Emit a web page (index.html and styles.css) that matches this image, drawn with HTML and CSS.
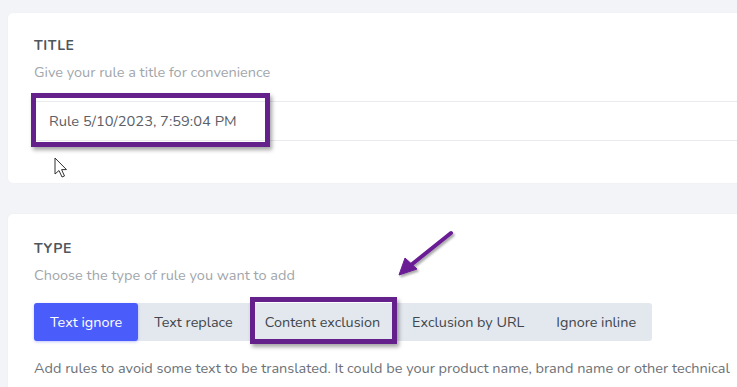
FILE: index.html
```html
<!DOCTYPE html>
<html>
<head>
<meta charset="utf-8">
<link rel="stylesheet" href="styles.css">
</head>
<body>
<div class="page">
  <section class="card card-title">
    <h3 class="label">TITLE</h3>
    <p class="hint">Give your rule a title for convenience</p>
    <div class="input">Rule 5/10/2023, 7:59:04 PM</div>
  </section>
  <section class="card card-type">
    <h3 class="label">TYPE</h3>
    <p class="hint">Choose the type of rule you want to add</p>
    <div class="group">
      <span class="btn active">Text ignore</span>
      <span class="btn">Text replace</span>
      <span class="btn">Content exclusion</span>
      <span class="btn">Exclusion by URL</span>
      <span class="btn">Ignore inline</span>
    </div>
    <p class="desc">Add rules to avoid some text to be translated. It could be your product name, brand name or other technical</p>
  </section>
</div>
<div class="mark mark-input"></div>
<div class="mark mark-btn"></div>
<svg class="arrow" width="70" height="60" viewBox="0 0 70 60">
  <defs>
    <filter id="sh" x="-30%" y="-30%" width="160%" height="160%">
      <feDropShadow dx="1.5" dy="2" stdDeviation="1.2" flood-color="#000" flood-opacity="0.35"/>
    </filter>
  </defs>
  <g filter="url(#sh)" fill="#6a1f95" stroke="#6a1f95">
    <line x1="57" y1="8" x2="17" y2="40" stroke-width="4" stroke-linecap="round"/>
    <polygon points="5,50 11,33 23,44" stroke-width="1" stroke-linejoin="round"/>
  </g>
</svg>
<svg class="cursor" width="16" height="22" viewBox="0 0 16 22">
  <path d="M1 1 L1 17 L5 13.5 L8 20 L10.5 19 L7.6 12.6 L12.5 12.6 Z" fill="#fff" stroke="#333" stroke-width="1" stroke-linejoin="round"/>
</svg>
</body>
</html>
```
FILE: styles.css
```css
html, body {
  margin: 0;
  padding: 0;
}
body {
  background: #f3f4f8;
  width: 737px;
  height: 387px;
  overflow: hidden;
  position: relative;
  font-family: "Nunito", "Lato", "Open Sans", sans-serif;
}
.page {
  padding: 13px 0 0 8px;
  display: flex;
  flex-direction: column;
  gap: 31px;
}
.card {
  background: #fff;
  border-radius: 5px;
  margin-right: -40px;
  padding: 0 26px;
  box-shadow: 0 0 2px rgba(0,0,0,0.03);
}
.card-title {
  height: 170px;
  padding-top: 23px;
  box-sizing: border-box;
}
.card-type {
  padding-top: 25px;
  height: 190px;
  box-sizing: border-box;
}
.label {
  margin: 0;
  font-size: 14px;
  line-height: 20px;
  font-weight: 700;
  letter-spacing: 0.6px;
  color: #50565d;
}
.hint {
  margin: 6px 0 0;
  font-size: 14.5px;
  line-height: 20px;
  color: #a1a6ab;
}
.input {
  margin-top: 19px;
  height: 40px;
  box-sizing: border-box;
  border-top: 1px solid #e8eaee;
  border-bottom: 1px solid #e8eaee;
  padding-left: 15px;
  font-size: 14.7px;
  line-height: 38px;
  color: #5b6066;
}
.group {
  margin-top: 18px;
  display: inline-flex;
  border-radius: 3px;
  background: #e3e8ee;
  height: 38px;
  align-self: flex-start;
}
.btn {
  padding: 0 16px;
  font-size: 14.4px;
  line-height: 38px;
  color: #40464c;
  white-space: nowrap;
}
.btn.active {
  background: #4a5cfa;
  color: #fff;
  border-radius: 3px;
  box-shadow: 0 1px 3px rgba(74,92,250,0.35);
}
.desc {
  margin: 17px 0 0;
  font-size: 14.5px;
  line-height: 20px;
  color: #6c7177;
  white-space: nowrap;
}
.mark {
  position: absolute;
  border: 5px solid #64218b;
  box-sizing: border-box;
  box-shadow: 2px 3px 4px rgba(0,0,0,0.35);
}
.mark-input {
  left: 31px;
  top: 93px;
  width: 239px;
  height: 54px;
}
.mark-btn {
  left: 250px;
  top: 297px;
  width: 147px;
  height: 47px;
}
.arrow {
  position: absolute;
  left: 394px;
  top: 225px;
}
.cursor {
  position: absolute;
  left: 54px;
  top: 157px;
}
```
